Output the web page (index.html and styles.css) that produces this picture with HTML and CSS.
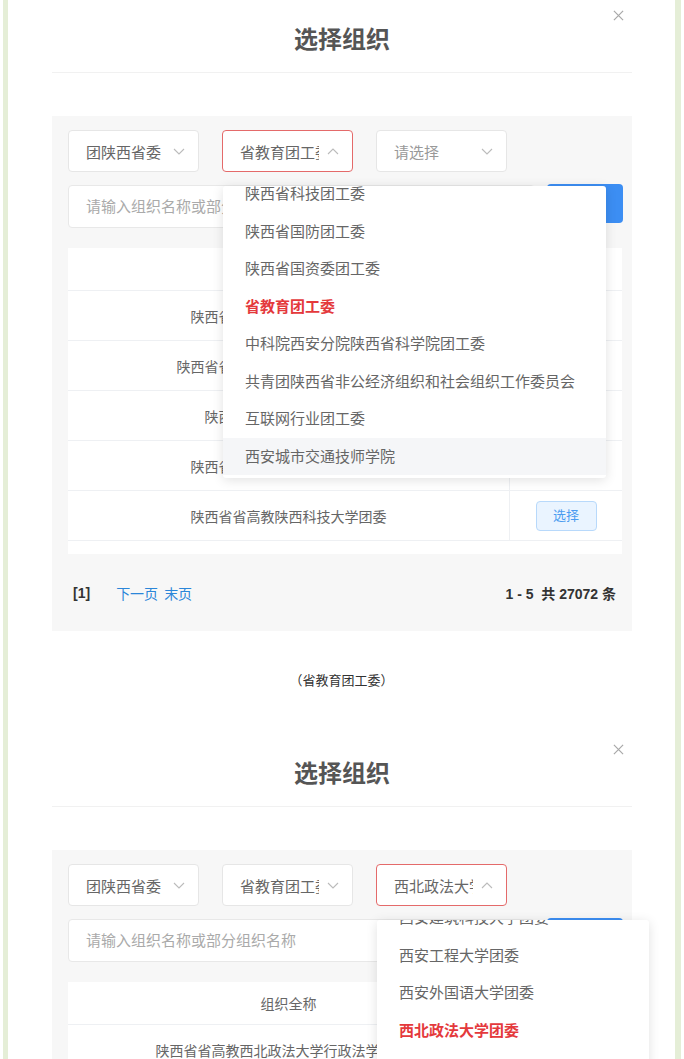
FILE: index.html
```html
<!DOCTYPE html>
<html lang="zh-CN">
<head>
    <meta charset="UTF-8">
    <meta name="viewport" content="width=device-width, initial-scale=1.0">
    <title>选择组织</title>
    <link rel="stylesheet" href="styles.css">
</head>
<body>
    <div class="page">
        <!-- first capture: level 2 open -->
        <section class="dialog">
            <header class="dialog-head">
                <h2 class="dialog-title">选择组织</h2>
                <svg class="dialog-close" viewBox="0 0 12 12"><path d="M1 1L11 11M11 1L1 11"/></svg>
            </header>
            <div class="panel">
                <div class="filters">
                    <div class="select">
                        <span class="select-text">团陕西省委</span>
                        <svg class="chevron" viewBox="0 0 12 7"><path d="M1 1L6 6L11 1"/></svg>
                    </div>
                    <div class="select is-open">
                        <span class="select-text">省教育团工委</span>
                        <svg class="chevron" viewBox="0 0 12 7"><path d="M1 6L6 1L11 6"/></svg>
                        <div class="dropdown dropdown-wide">
                            <ul class="dropdown-list">
                                <li>陕西省科技团工委</li>
                                <li>陕西省国防团工委</li>
                                <li>陕西省国资委团工委</li>
                                <li class="selected">省教育团工委</li>
                                <li>中科院西安分院陕西省科学院团工委</li>
                                <li>共青团陕西省非公经济组织和社会组织工作委员会</li>
                                <li>互联网行业团工委</li>
                                <li class="hover">西安城市交通技师学院</li>
                            </ul>
                        </div>
                    </div>
                    <div class="select">
                        <span class="select-text placeholder">请选择</span>
                        <svg class="chevron" viewBox="0 0 12 7"><path d="M1 1L6 6L11 1"/></svg>
                    </div>
                </div>
                <div class="search">
                    <div class="search-input">请输入组织名称或部分组织名称</div>
                    <button class="search-btn">搜索</button>
                </div>
                <div class="table-wrap">
                    <table class="org-table">
                        <thead>
                            <tr><th class="col-name">组织全称</th><th class="col-op">操作</th></tr>
                        </thead>
                        <tbody>
                            <tr><td>陕西省省高教西安交通大学团委</td><td class="col-op"></td></tr>
                            <tr><td>陕西省省高教西安电子科技大学团委</td><td class="col-op"></td></tr>
                            <tr><td>陕西省省高教长安大学团委</td><td class="col-op"></td></tr>
                            <tr><td>陕西省省高教陕西师范大学团委</td><td class="col-op"></td></tr>
                            <tr><td>陕西省省高教陕西科技大学团委</td><td class="col-op"><span class="pick-btn">选择</span></td></tr>
                        </tbody>
                    </table>
                </div>
                <div class="pager">
                    <span class="pager-current">[1]</span>
                    <a class="pager-link">下一页</a>
                    <a class="pager-link">末页</a>
                    <span class="pager-total">1 - 5&nbsp; 共 27072 条</span>
                </div>
            </div>
        </section>

        <p class="caption">（省教育团工委）</p>

        <!-- second capture: level 3 open -->
        <section class="dialog">
            <header class="dialog-head">
                <h2 class="dialog-title">选择组织</h2>
                <svg class="dialog-close" viewBox="0 0 12 12"><path d="M1 1L11 11M11 1L1 11"/></svg>
            </header>
            <div class="panel">
                <div class="filters">
                    <div class="select">
                        <span class="select-text">团陕西省委</span>
                        <svg class="chevron" viewBox="0 0 12 7"><path d="M1 1L6 6L11 1"/></svg>
                    </div>
                    <div class="select">
                        <span class="select-text">省教育团工委</span>
                        <svg class="chevron" viewBox="0 0 12 7"><path d="M1 1L6 6L11 1"/></svg>
                    </div>
                    <div class="select is-open">
                        <span class="select-text">西北政法大学团委</span>
                        <svg class="chevron" viewBox="0 0 12 7"><path d="M1 6L6 1L11 6"/></svg>
                        <div class="dropdown dropdown-narrow">
                            <ul class="dropdown-list">
                                <li>西安建筑科技大学团委</li>
                                <li>西安工程大学团委</li>
                                <li>西安外国语大学团委</li>
                                <li class="selected">西北政法大学团委</li>
                                <li>西安石油大学团委</li>
                            </ul>
                        </div>
                    </div>
                </div>
                <div class="search">
                    <div class="search-input">请输入组织名称或部分组织名称</div>
                    <button class="search-btn">搜索</button>
                </div>
                <div class="table-wrap">
                    <table class="org-table">
                        <thead>
                            <tr><th class="col-name">组织全称</th><th class="col-op">操作</th></tr>
                        </thead>
                        <tbody>
                            <tr><td>陕西省省高教西北政法大学行政法学院团委</td><td class="col-op"><span class="pick-btn">选择</span></td></tr>
                        </tbody>
                    </table>
                </div>
            </div>
        </section>
    </div>
</body>
</html>
```

FILE: styles.css
```css
html, body {
    margin: 0;
    padding: 0;
    height: 1059px;
    overflow: hidden;
    background: #fff;
}
body {
    font-family: 'Liberation Sans', 'Noto Sans CJK SC', sans-serif;
    color: #666;
}
.page {
    margin: 0 3px;
    height: 1059px;
    border-left: 5px solid #e5eed7;
    border-right: 6px solid #e5eed7;
    overflow: hidden;
}

/* Dialog */
.dialog {
    margin: 0 43px 0 44px;
}
.dialog-head {
    position: relative;
    padding: 24px 0 16px;
    border-bottom: 1px solid #f1f1f1;
    text-align: center;
}
.dialog-title {
    margin: 0;
    font-size: 24px;
    line-height: 32px;
    font-weight: bold;
    color: #555;
}
.dialog-close {
    position: absolute;
    top: 10px;
    right: 8px;
    width: 11px;
    height: 11px;
    fill: none;
    stroke: #a8a8a8;
    stroke-width: 1.3;
}
.panel {
    margin-top: 43px;
    padding: 14px 9px 24px 16px;
    background-color: #f7f7f7;
}

/* Selects */
.filters {
    display: flex;
    gap: 23px;
}
.select {
    position: relative;
    box-sizing: border-box;
    width: 131px;
    height: 42px;
    padding: 0 13px 0 17px;
    display: flex;
    align-items: center;
    gap: 8px;
    background: #fff;
    border: 1px solid #e6e6e6;
    border-radius: 4px;
    font-size: 15px;
}
.select.is-open {
    border-color: #e46a6a;
}
.select-text {
    flex: 1;
    overflow: hidden;
    white-space: nowrap;
    color: #666;
}
.select-text.placeholder {
    color: #999;
}
.chevron {
    width: 12px;
    height: 7px;
    flex-shrink: 0;
    fill: none;
    stroke: #bbb;
    stroke-width: 1.1;
}
.dropdown {
    position: absolute;
    top: 55px;
    left: 0;
    z-index: 5;
    height: 292px;
    overflow: hidden;
    background: #fff;
    border-radius: 3px;
    box-shadow: 0 2px 12px rgba(0, 0, 0, 0.12);
}
.dropdown-wide {
    width: 383px;
}
.dropdown-narrow {
    width: 272px;
    height: 200px;
}
.dropdown-list {
    list-style: none;
    margin: -11px 0 0;
    padding: 0;
}
.dropdown-narrow .dropdown-list {
    margin-top: -21px;
}
.dropdown-list li {
    height: 37.5px;
    line-height: 37.5px;
    padding-left: 22px;
    font-size: 15px;
    color: #666;
    white-space: nowrap;
}
.dropdown-list li.selected {
    color: #e4393c;
    font-weight: bold;
}
.dropdown-list li.hover {
    background-color: #f5f6f8;
}

/* Search */
.search {
    display: flex;
    align-items: flex-start;
    gap: 12px;
    margin-top: 13px;
}
.search-input {
    flex: 1;
    box-sizing: border-box;
    height: 43px;
    line-height: 41px;
    padding-left: 17px;
    background: #fff;
    border: 1px solid #e8e8e8;
    border-radius: 4px;
    font-size: 15px;
    color: #aaa;
}
.search-btn {
    width: 76px;
    height: 39px;
    margin-top: -1px;
    border: none;
    border-radius: 4px;
    background-color: #3c8ef3;
    color: #fff;
    font-family: inherit;
    font-size: 15px;
}

/* Table */
.table-wrap {
    margin-top: 20px;
    width: 554px;
    padding-bottom: 13px;
    background: #fff;
}
.org-table {
    width: 100%;
    border-collapse: collapse;
    font-size: 14px;
}
.org-table th {
    height: 42px;
    padding: 0;
    font-weight: normal;
    color: #666;
    border-bottom: 1px solid #eef0f3;
}
.org-table td {
    height: 49px;
    padding: 0;
    text-align: center;
    color: #666;
    border-bottom: 1px solid #eef0f3;
    white-space: nowrap;
}
.org-table .col-name {
    width: 441px;
}
.org-table .col-op {
    border-left: 1px solid #eef0f3;
}
.pick-btn {
    display: inline-block;
    width: 59px;
    height: 28px;
    line-height: 28px;
    font-size: 13px;
    color: #4a9cf0;
    background-color: #eaf4ff;
    border: 1px solid #b8d9fb;
    border-radius: 4px;
}

/* Pager */
.pager {
    display: flex;
    align-items: center;
    gap: 6px;
    height: 28px;
    margin-top: 25px;
    padding: 0 7px 0 5px;
    font-size: 14px;
}
.pager-current {
    color: #333;
    font-weight: bold;
    margin-right: 20px;
}
.pager-link {
    color: #2b86d9;
}
.pager-total {
    margin-left: auto;
    color: #333;
    font-weight: bold;
}

.caption {
    margin: 40px 0 43px;
    line-height: 20px;
    text-align: center;
    font-size: 13px;
    color: #333;
}
```
